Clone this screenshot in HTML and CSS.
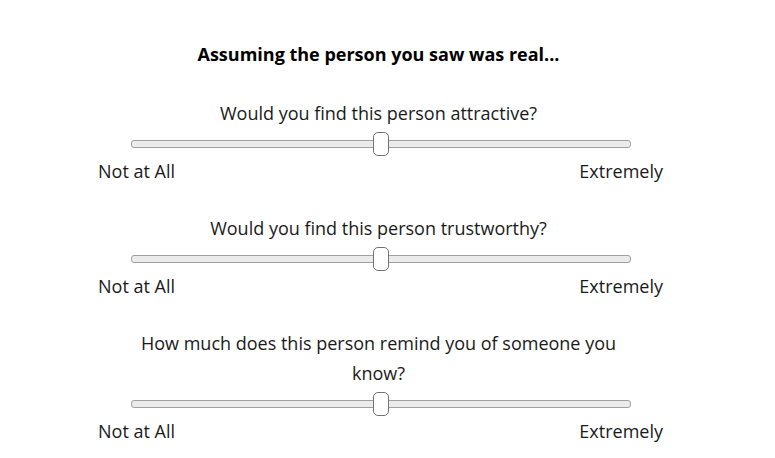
FILE: index.html
```html
<!DOCTYPE html>
<html>
<head>
<meta charset="utf-8">
<link rel="stylesheet" href="styles.css">
</head>
<body>
<main class="survey">
  <h1 class="title">Assuming the person you saw was real...</h1>
  <section class="item">
    <p class="question">Would you find this person attractive?</p>
    <input class="slider" type="range" min="0" max="100" value="50">
    <div class="labels"><span>Not at All</span><span>Extremely</span></div>
  </section>
  <section class="item">
    <p class="question">Would you find this person trustworthy?</p>
    <input class="slider" type="range" min="0" max="100" value="50">
    <div class="labels"><span>Not at All</span><span>Extremely</span></div>
  </section>
  <section class="item">
    <p class="question">How much does this person remind you of someone you know?</p>
    <input class="slider" type="range" min="0" max="100" value="50">
    <div class="labels"><span>Not at All</span><span>Extremely</span></div>
  </section>
</main>
</body>
</html>
```
FILE: styles.css
```css
* { box-sizing: border-box; }
html, body { margin: 0; padding: 0; background: #fff; }
body {
  font-family: "Open Sans", "Noto Sans", sans-serif;
  color: #1a1a1a;
  padding-right: 14px;
}
.survey {
  width: 565px;
  margin: 0 auto;
  padding-top: 41px;
  display: flex;
  flex-direction: column;
  align-items: center;
}
.title {
  margin: 0 0 31px;
  padding-right: 4px;
  font-size: 18px;
  font-weight: 700;
  line-height: 26px;
  color: #000;
}
.item {
  width: 100%;
  display: flex;
  flex-direction: column;
  align-items: center;
  margin-bottom: 29px;
}
.question {
  margin: 0;
  width: 500px;
  padding-right: 4px;
  text-align: center;
  font-size: 18px;
  line-height: 30px;
}
.slider {
  -webkit-appearance: none;
  appearance: none;
  width: 500px;
  height: 24px;
  margin: 4px 0 0;
  background: transparent;
}
.slider::-webkit-slider-runnable-track {
  height: 8px;
  background: #ebebeb;
  border: 1px solid #a0a0a0;
  border-radius: 3px;
}
.slider::-webkit-slider-thumb {
  -webkit-appearance: none;
  width: 16px;
  height: 24px;
  margin-top: -9px;
  background: #fff;
  border: 1.5px solid #737373;
  border-radius: 5px;
}
.labels {
  width: 100%;
  display: flex;
  justify-content: space-between;
  font-size: 18px;
  line-height: 26px;
  margin-top: 2px;
}
```
